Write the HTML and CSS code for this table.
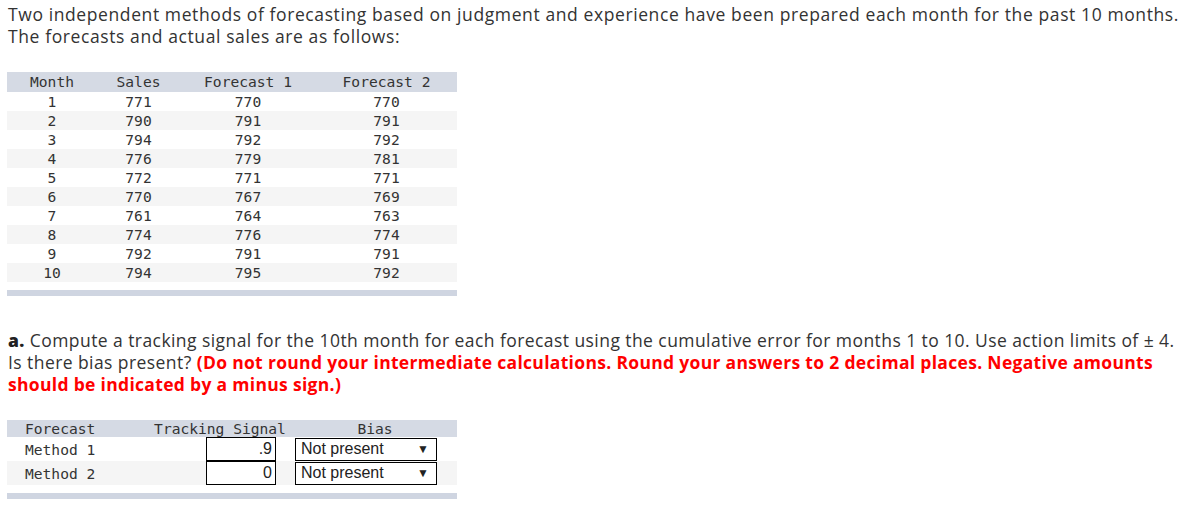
FILE: index.html
```html
<!DOCTYPE html>
<html>
<head>
<meta charset="utf-8">
<link rel="stylesheet" href="styles.css">
</head>
<body>
<p class="intro">Two independent methods of forecasting based on judgment and experience have been prepared each month for the past 10 months.<br>The forecasts and actual sales are as follows:</p>

<div class="data">
  <div class="row head"><span>Month</span><span>Sales</span><span>Forecast 1</span><span>Forecast 2</span></div>
  <div class="row"><span>1</span><span>771</span><span>770</span><span>770</span></div>
  <div class="row alt"><span>2</span><span>790</span><span>791</span><span>791</span></div>
  <div class="row"><span>3</span><span>794</span><span>792</span><span>792</span></div>
  <div class="row alt"><span>4</span><span>776</span><span>779</span><span>781</span></div>
  <div class="row"><span>5</span><span>772</span><span>771</span><span>771</span></div>
  <div class="row alt"><span>6</span><span>770</span><span>767</span><span>769</span></div>
  <div class="row"><span>7</span><span>761</span><span>764</span><span>763</span></div>
  <div class="row alt"><span>8</span><span>774</span><span>776</span><span>774</span></div>
  <div class="row"><span>9</span><span>792</span><span>791</span><span>791</span></div>
  <div class="row alt"><span>10</span><span>794</span><span>795</span><span>792</span></div>
  <div class="bar"></div>
</div>

<p class="question"><b class="lbl">a.</b> Compute a tracking signal for the 10th month for each forecast using the cumulative error for months 1 to 10. Use action limits of ± 4.<br>Is there bias present? <b class="red">(Do not round your intermediate calculations. Round your answers to 2 decimal places. Negative amounts<br>should be indicated by a minus sign.)</b></p>

<div class="answers">
  <div class="arow head"><span class="c1">Forecast</span><span class="h2">Tracking Signal</span><span class="h3">Bias</span></div>
  <div class="arow"><span class="c1">Method 1</span><span class="c2"><span class="inp">.9</span></span><span class="c3"><span class="sel">Not present<i>▼</i></span></span></div>
  <div class="arow alt"><span class="c1">Method 2</span><span class="c2"><span class="inp">0</span></span><span class="c3"><span class="sel">Not present<i>▼</i></span></span></div>
  <div class="bar"></div>
</div>
</body>
</html>
```

FILE: styles.css
```css
html, body {
  margin: 0;
  background: #fff;
}
body {
  padding: 3px 0 0 8px;
  font-family: "Open Sans", Lato, sans-serif;
  font-size: 17.5px;
  color: #333;
}
.intro {
  margin: 0;
  line-height: 22px;
  white-space: nowrap;
  letter-spacing: 0.6px;
}
.data {
  width: 450px;
  margin: 25px 0 0 -1px;
  font-family: "DejaVu Sans Mono", monospace;
  font-size: 14.6px;
  color: #333;
}
.row {
  display: grid;
  grid-template-columns: 90px 83px 136px 141px;
  height: 19px;
  line-height: 19px;
  text-align: center;
}
.row.head {
  background: #d5dae4;
  height: 20px;
  line-height: 20px;
}
.row.alt, .arow.alt {
  background: #f5f5f5;
}
.bar {
  height: 6px;
  background: #cfd5e1;
  margin-top: 8px;
}
.question {
  margin: 33px 0 0 0;
  line-height: 22px;
  white-space: nowrap;
  letter-spacing: 0.43px;
}
.lbl {
  font-weight: 800;
  color: #222;
}
.red {
  color: #f00;
  font-weight: 700;
  letter-spacing: 0.31px;
}
.answers {
  width: 450px;
  margin: 25px 0 0 -1px;
  font-family: "DejaVu Sans Mono", monospace;
  font-size: 14.6px;
  color: #333;
}
.arow {
  display: grid;
  grid-template-columns: 143px 136px 171px;
  height: 24px;
  align-items: center;
  white-space: nowrap;
}
.arow.head {
  height: 17px;
  line-height: 17px;
  background: #d5dae4;
}
.c1 {
  padding-left: 18px;
}
.h2 {
  text-align: center;
  padding-left: 4px;
}
.h3 {
  text-align: center;
  padding-left: 7px;
}
.c2 {
  display: flex;
  justify-content: flex-end;
  padding-right: 10px;
}
.c3 {
  padding-left: 9px;
}
.inp {
  box-sizing: border-box;
  width: 70px;
  height: 24px;
  border: 1px solid #000;
  background: #fff;
  font-family: "Liberation Sans", Arial, sans-serif;
  font-size: 16px;
  color: #222;
  text-align: right;
  padding-right: 3px;
  line-height: 22px;
}
.sel {
  box-sizing: border-box;
  display: flex;
  justify-content: space-between;
  align-items: center;
  width: 142px;
  height: 23px;
  border: 1px solid #000;
  background: #fff;
  font-family: "Liberation Sans", Arial, sans-serif;
  font-size: 16px;
  color: #222;
  padding: 0 7px 0 5px;
}
.sel i {
  font-style: normal;
  font-size: 12px;
}
```
